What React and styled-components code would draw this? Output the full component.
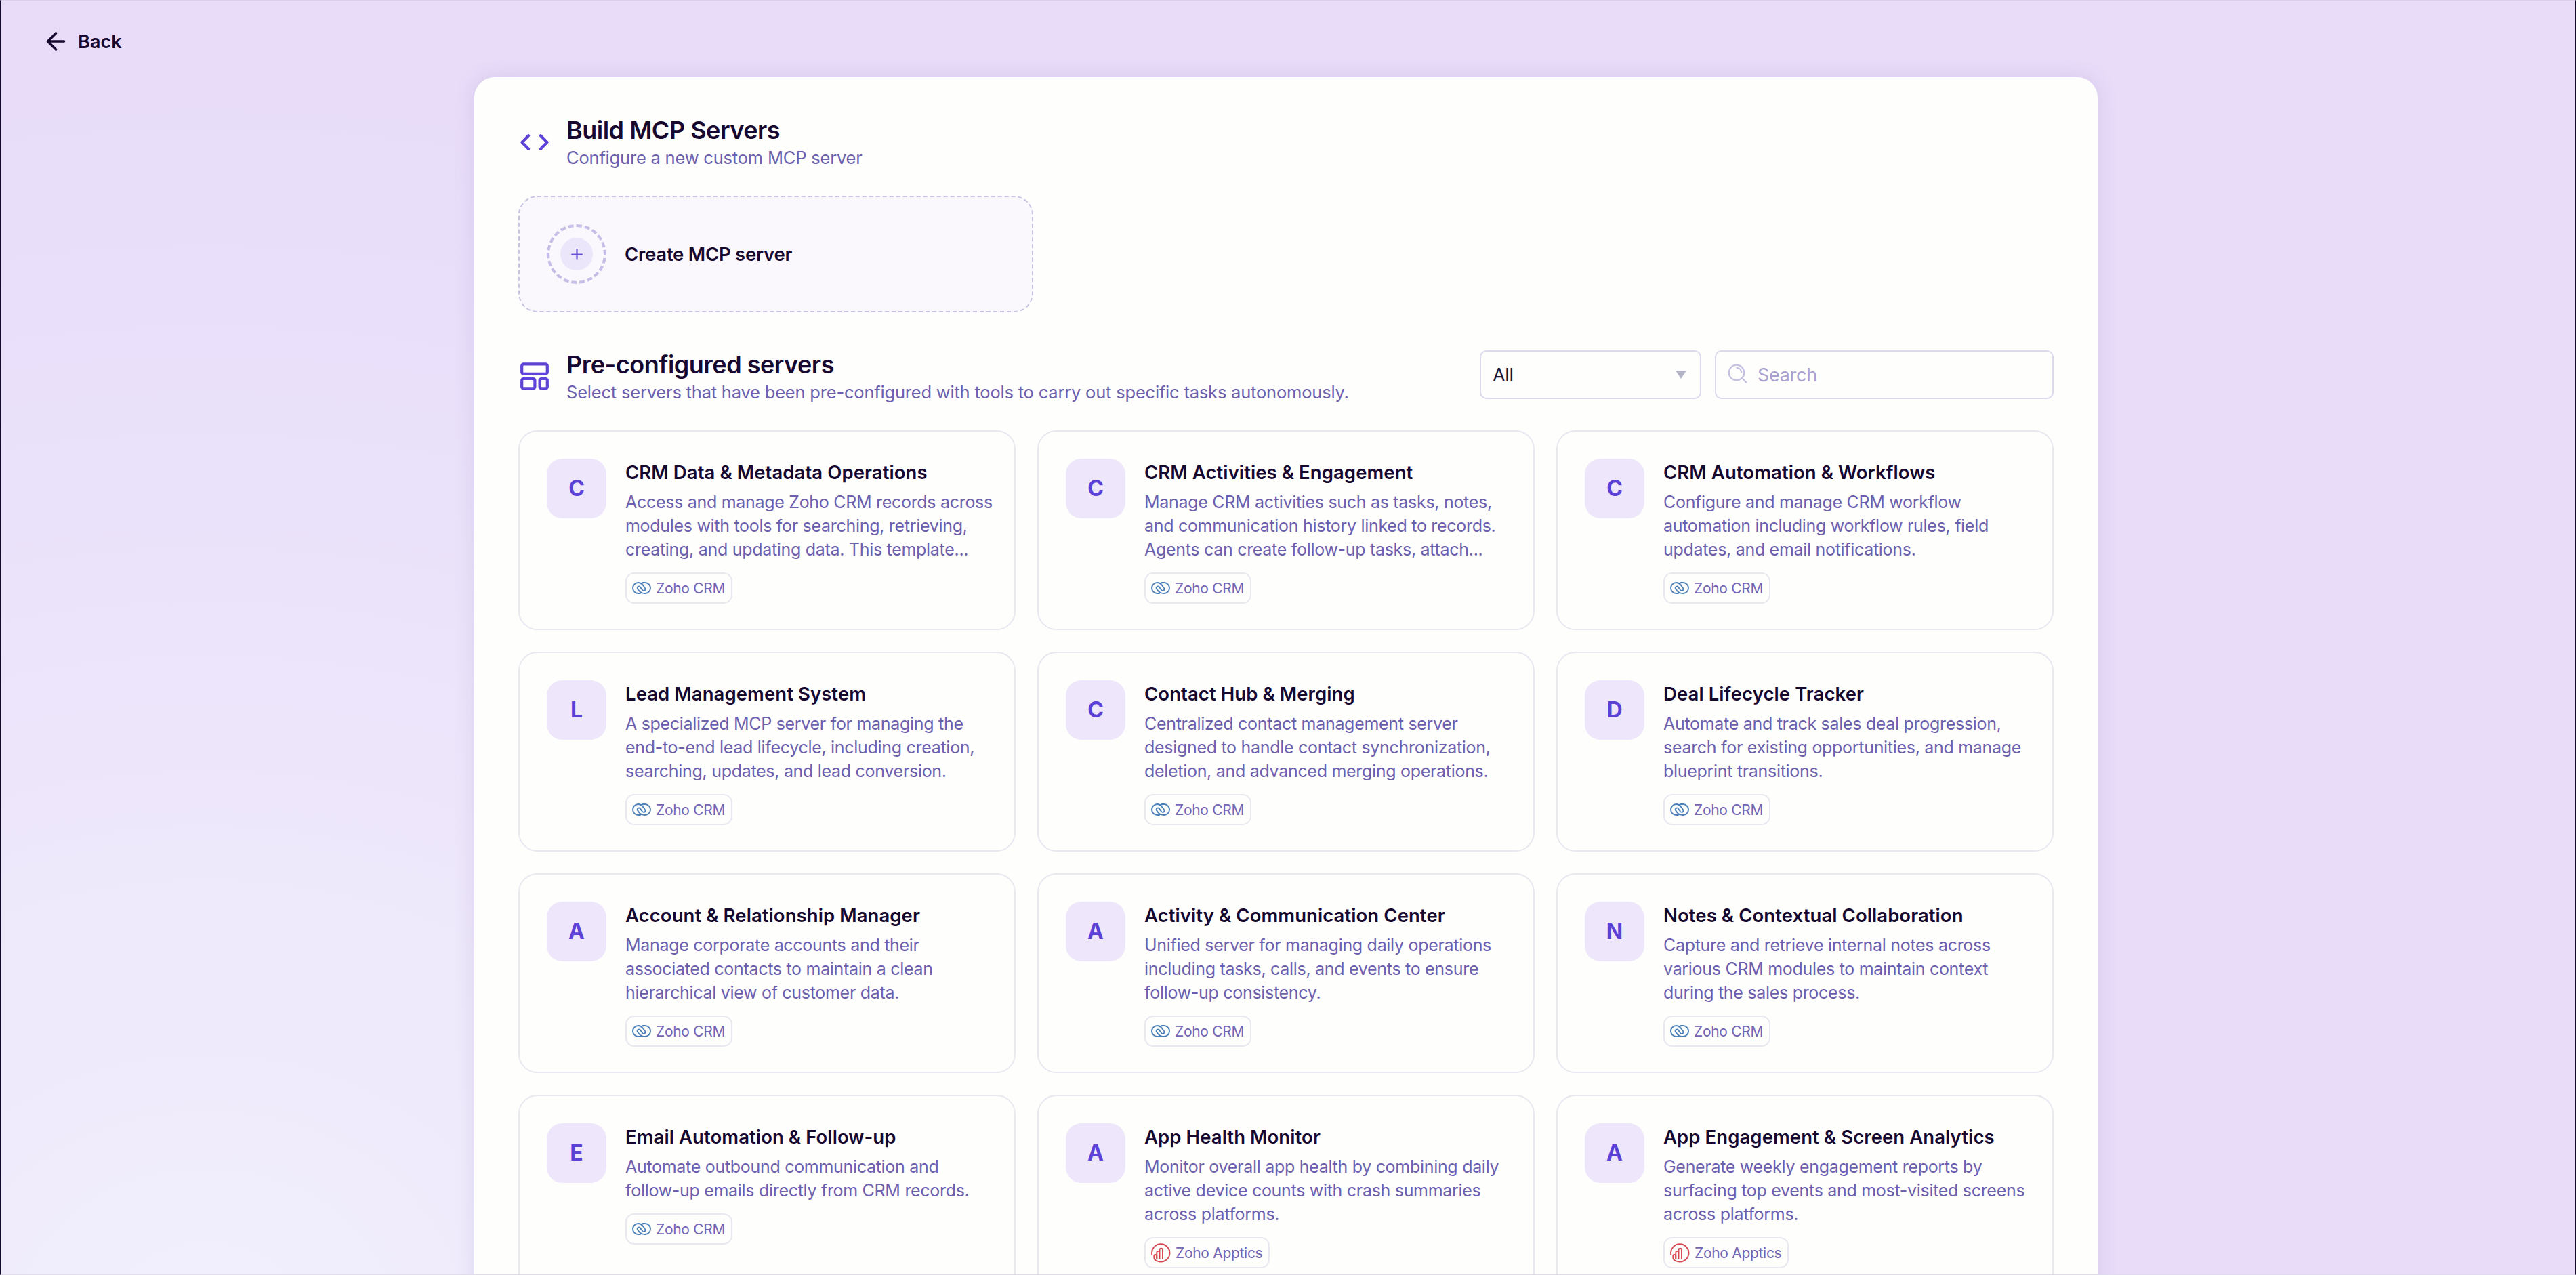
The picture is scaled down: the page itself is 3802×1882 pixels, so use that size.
import React from 'react'
import styled, { createGlobalStyle } from 'styled-components'

const GlobalStyle = createGlobalStyle`
  * {
    box-sizing: border-box;
  }
  body {
    margin: 0;
    font-family: Inter, 'Liberation Sans', sans-serif;
    color: #170830;
  }
`

const Page = styled.div`
  width: 100%;
  height: 1882px;
  overflow: hidden;
  border: 1px solid #120a2e;
  border-top-color: #d9d0ea;
  border-bottom-color: #dedae9;
  background: radial-gradient(
    ellipse 2300px 1900px at 8% 104%,
    #f1effd 0%,
    #eee8fb 35%,
    #e9dffa 78%,
    #e8dcf9 100%
  );
`

const TopBar = styled.header`
  display: flex;
  align-items: flex-start;
  gap: 18px;
  height: 113px;
  padding: 8px 0 0 67px;
  svg {
    margin-top: 38px;
  }
`

const BackLabel = styled.div`
  font-size: 27px;
  font-weight: 600;
  line-height: 106px;
  letter-spacing: 0.1px;
`

const Panel = styled.main`
  width: 2396px;
  height: 1900px;
  margin-left: 699px;
  padding: 48px 65px;
  border-radius: 30px;
  background: #fefefd;
  box-shadow: 0 0 30px rgba(105, 85, 150, 0.15);
`

const SectionHeader = styled.div`
  display: flex;
  align-items: center;
  height: ${props => props.$height}px;
  padding-bottom: ${props => props.$space}px;
`

const SectionIcon = styled.div`
  flex: none;
  width: 71px;
  padding-left: 3px;
  svg {
    display: block;
    margin-top: -2px;
  }
`

const Title = styled.h2`
  margin: 0;
  font-size: 36px;
  line-height: 44px;
  font-weight: 600;
  letter-spacing: -0.5px;
`

const Subtitle = styled.p`
  margin: 0;
  font-size: 25.5px;
  line-height: 38px;
  letter-spacing: -0.2px;
  color: #6c60ae;
`

const CreateBox = styled.div`
  display: flex;
  align-items: center;
  gap: 27px;
  width: 760px;
  height: 172px;
  margin-bottom: 50px;
  padding-left: 40px;
  border: 2px dashed #c8c2e3;
  border-radius: 28px;
  background: #faf8fd;
  font-size: 27.5px;
  font-weight: 600;
  letter-spacing: -0.25px;
`

const Ring = styled.div`
  display: flex;
  align-items: center;
  justify-content: center;
  width: 88px;
  height: 88px;
  border: 4px dashed #c6bee6;
  border-radius: 50%;
`

const RingCore = styled.div`
  display: flex;
  align-items: center;
  justify-content: center;
  width: 48px;
  height: 48px;
  border-radius: 50%;
  background: #ece6fa;
`

const Filters = styled.div`
  display: flex;
  gap: 20px;
  margin-left: auto;
  margin-bottom: 8px;
`

const Field = styled.div`
  display: flex;
  align-items: center;
  gap: 15px;
  width: ${props => props.$width}px;
  height: 72px;
  padding: 0 20px 0 17px;
  border: 2px solid #dcd8ee;
  border-radius: 10px;
  font-size: 27px;
  letter-spacing: -0.3px;
  color: ${props => (props.$muted ? '#a9a1d0' : '#1f1833')};
  svg {
    margin-top: -4px;
  }
`

const Caret = styled.span`
  margin-left: auto;
  border: 8px solid transparent;
  border-top: 12px solid #b3b3c6;
  border-bottom: 0;
`

const Grid = styled.div`
  display: grid;
  grid-template-columns: repeat(3, 734px);
  grid-auto-rows: 295px;
  gap: 32px;
`

const CardBox = styled.div`
  display: flex;
  gap: 28px;
  padding: 40px;
  border: 2px solid #e9e7ef;
  border-radius: 28px;
`

const Avatar = styled.div`
  flex: none;
  width: 88px;
  height: 88px;
  border-radius: 23px;
  background: #eee6fb;
  color: #5b41d6;
  font-size: 32px;
  font-weight: 700;
  line-height: 88px;
  text-align: center;
`

const CardTitle = styled.h3`
  margin: 3px 0 10px;
  font-size: 27.5px;
  line-height: 34px;
  font-weight: 600;
  letter-spacing: 0.08px;
  white-space: nowrap;
`

const Line = styled.div`
  font-size: 25px;
  line-height: 35px;
  letter-spacing: -0.3px;
  color: #6c60ae;
  white-space: nowrap;
`

const Tag = styled.div`
  display: inline-flex;
  align-items: center;
  gap: 7px;
  height: 46px;
  margin-top: 16px;
  padding: 0 9px 0 8px;
  border: 2px solid #e9e7ef;
  border-radius: 13px;
  font-size: 21px;
  letter-spacing: -0.3px;
  color: #7265b4;
`

const BackIcon = () => (
  <svg width="29" height="28" viewBox="0 0 29 28" fill="none" stroke="#170830" strokeWidth="3.6" strokeLinecap="round" strokeLinejoin="round">
    <path d="M14.500 2L2.500 14L14.500 26M2.500 14H26.500" />
  </svg>
)

const CodeIcon = () => (
  <svg width="42" height="24" viewBox="0 0 42 24" fill="none" stroke="#5f43d8" strokeWidth="4.2" strokeLinecap="round" strokeLinejoin="round">
    <path d="M12 2.200L2.500 12L12 21.800M30 2.200L39.500 12L30 21.800" />
  </svg>
)

const TemplateIcon = () => (
  <svg width="42" height="42" viewBox="0 0 42 42" fill="none" stroke="#5f43d8" strokeWidth="4.200">
    <rect x="2.200" y="2.400" width="37.600" height="14.400" rx="2.500" />
    <rect x="2.200" y="24" width="19.200" height="14.400" rx="2.500" />
    <rect x="28.600" y="24" width="11.200" height="14.400" rx="2.500" />
  </svg>
)

const PlusIcon = () => (
  <svg width="17" height="17" viewBox="0 0 17 17" fill="none" stroke="#6a50dc" strokeWidth="2.2" strokeLinecap="round">
    <path d="M8.500 1.200V15.800M1.200 8.500H15.800" />
  </svg>
)

const SearchIcon = () => (
  <svg width="29" height="29" viewBox="0 0 29 29" fill="none" stroke="#c6c1e1" strokeWidth="2.3" strokeLinecap="round">
    <circle cx="13" cy="13" r="11.300" />
    <path d="M21 21L27.500 27.500M13.500 5.800A7.200 7.200 0 0 1 20.200 12.500" />
  </svg>
)

const CrmIcon = () => (
  <svg width="28" height="20" viewBox="0 0 28 20" fill="none" stroke="#4a7fb8" strokeWidth="1.9" strokeLinecap="round">
    <path d="M12 18H9A8 8 0 0 1 9 2C12 2 14 3.200 15.500 5.200L19 10A2.400 2.400 0 0 1 15.200 13L11.500 8A2.400 2.400 0 0 0 7.800 10.800L10.500 14.500C12.800 17.400 15.500 18 19 18" />
    <path d="M16 2H19A8 8 0 0 1 19 18M13 3.200C14.500 2.200 16 2 19 2" />
  </svg>
)

const AppticsIcon = () => (
  <svg width="29" height="29" viewBox="0 0 29 29" fill="none" stroke="#d64550" strokeWidth="1.9" strokeLinecap="round" strokeLinejoin="round">
    <path d="M1.300 17A13.200 13.200 0 1 1 9 26.500C5.500 25.500 4.300 23 4.300 21V19A2 2 0 0 1 8.300 19V23" />
    <path d="M8.300 23V14A2 2 0 0 1 12.500 14V23M12.500 23V10A2.200 2.200 0 0 1 17 10V23" />
  </svg>
)

const servers = [
  ['C', 'CRM Data & Metadata Operations', ['Access and manage Zoho CRM records across', 'modules with tools for searching, retrieving,', 'creating, and updating data. This template...']],
  ['C', 'CRM Activities & Engagement', ['Manage CRM activities such as tasks, notes,', 'and communication history linked to records.', 'Agents can create follow-up tasks, attach...']],
  ['C', 'CRM Automation & Workflows', ['Configure and manage CRM workflow', 'automation including workflow rules, field', 'updates, and email notifications.']],
  ['L', 'Lead Management System', ['A specialized MCP server for managing the', 'end-to-end lead lifecycle, including creation,', 'searching, updates, and lead conversion.']],
  ['C', 'Contact Hub & Merging', ['Centralized contact management server', 'designed to handle contact synchronization,', 'deletion, and advanced merging operations.']],
  ['D', 'Deal Lifecycle Tracker', ['Automate and track sales deal progression,', 'search for existing opportunities, and manage', 'blueprint transitions.']],
  ['A', 'Account & Relationship Manager', ['Manage corporate accounts and their', 'associated contacts to maintain a clean', 'hierarchical view of customer data.']],
  ['A', 'Activity & Communication Center', ['Unified server for managing daily operations', 'including tasks, calls, and events to ensure', 'follow-up consistency.']],
  ['N', 'Notes & Contextual Collaboration', ['Capture and retrieve internal notes across', 'various CRM modules to maintain context', 'during the sales process.']],
  ['E', 'Email Automation & Follow-up', ['Automate outbound communication and', 'follow-up emails directly from CRM records.']],
  ['A', 'App Health Monitor', ['Monitor overall app health by combining daily', 'active device counts with crash summaries', 'across platforms.'], 'Zoho Apptics'],
  ['A', 'App Engagement & Screen Analytics', ['Generate weekly engagement reports by', 'surfacing top events and most-visited screens', 'across platforms.'], 'Zoho Apptics']
]

const ServerCard = ({ letter, title, lines, app }) => (
  <CardBox>
    <Avatar>{letter}</Avatar>
    <div>
      <CardTitle>{title}</CardTitle>
      {lines.map(line => (
        <Line key={line}>{line}</Line>
      ))}
      <Tag>
        {app === 'Zoho CRM' ? <CrmIcon /> : <AppticsIcon />}
        {app}
      </Tag>
    </div>
  </CardBox>
)

export default () => {
  return (
    <Page>
      <GlobalStyle />
      <TopBar>
        <BackIcon />
        <BackLabel>Back</BackLabel>
      </TopBar>
      <Panel>
        <SectionHeader $height={127} $space={30}>
          <SectionIcon>
            <CodeIcon />
          </SectionIcon>
          <div>
            <Title>Build MCP Servers</Title>
            <Subtitle>Configure a new custom MCP server</Subtitle>
          </div>
        </SectionHeader>
        <CreateBox>
          <Ring>
            <RingCore>
              <PlusIcon />
            </RingCore>
          </Ring>
          Create MCP server
        </CreateBox>
        <SectionHeader $height={124} $space={32}>
          <SectionIcon>
            <TemplateIcon />
          </SectionIcon>
          <div>
            <Title>Pre-configured servers</Title>
            <Subtitle>Select servers that have been pre-configured with tools to carry out specific tasks autonomously.</Subtitle>
          </div>
          <Filters>
            <Field $width={327}>
              All
              <Caret />
            </Field>
            <Field $width={500} $muted>
              <SearchIcon />
              Search
            </Field>
          </Filters>
        </SectionHeader>
        <Grid>
          {servers.map(([letter, title, lines, app = 'Zoho CRM']) => (
            <ServerCard key={title} letter={letter} title={title} lines={lines} app={app} />
          ))}
        </Grid>
      </Panel>
    </Page>
  )
}
